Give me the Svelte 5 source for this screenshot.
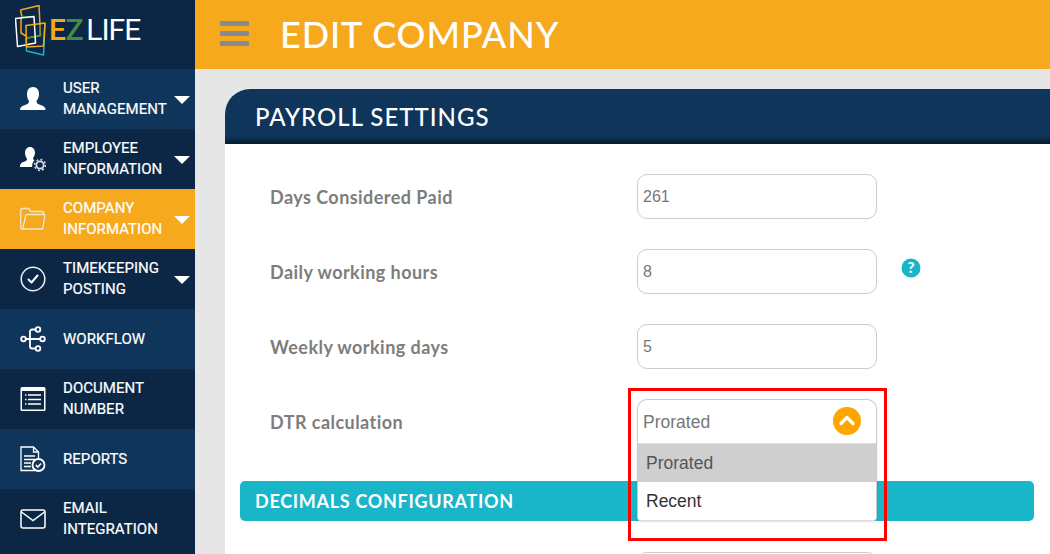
<script>
  const menu = [
    { label: ['USER', 'MANAGEMENT'], icon: 'user', caret: true, tone: 'light' },
    { label: ['EMPLOYEE', 'INFORMATION'], icon: 'usergear', caret: true, tone: 'dark' },
    { label: ['COMPANY', 'INFORMATION'], icon: 'folder', caret: true, tone: 'active' },
    { label: ['TIMEKEEPING', 'POSTING'], icon: 'check', caret: true, tone: 'dark' },
    { label: ['WORKFLOW'], icon: 'flow', caret: false, tone: 'light' },
    { label: ['DOCUMENT', 'NUMBER'], icon: 'list', caret: false, tone: 'dark' },
    { label: ['REPORTS'], icon: 'report', caret: false, tone: 'light' },
    { label: ['EMAIL', 'INTEGRATION'], icon: 'mail', caret: false, tone: 'dark' }
  ];

  const fields = [
    { label: 'Days Considered Paid', value: '261' },
    { label: 'Daily working hours', value: '8', help: true },
    { label: 'Weekly working days', value: '5' }
  ];
</script>

<div class="page">
  <aside class="sidebar">
    <div class="logo">
      <svg class="logo-mark" width="32" height="52" viewBox="15 5 32 52" fill="none" stroke-width="1.500" stroke-linejoin="round">
        <path d="M20.500 10L39 5.500 40.500 35.500 27 38" stroke="#f6a81c" />
        <path d="M20.500 10L22 17M21 17v16l5 3" stroke="#f6a81c" />
        <path d="M21 17h13M40 25v11l-13 2" stroke="#3f8f3f" />
        <path d="M15.500 18.500L34 16.500 35.500 43 17.500 46.500z" stroke="#fff" />
        <path d="M26 38l.5 13 17 4 1.500-32" stroke="#19b5c9" />
        <path d="M26 25.500L45 23l-1.500 23L26.500 47z" stroke="#f6a81c" />
      </svg>
      <span class="wordmark"><span class="e">E</span><span class="z">Z</span><span class="life">LIFE</span></span>
    </div>
    {#each menu as item}
      <div class="item {item.tone}">
        <div class="icon">
          {#if item.icon === 'user'}
            <svg width="26" height="26" viewBox="0 0 26 26" fill="#fff"><path d="M13 1c4 0 6 3 6 7 0 3-1 5-2.500 7 0 2 1 3 4 4 3 1 5 2 5 5H0c0-3 2-4 5-5 3-1 4-2 4-4C7.500 13 7 11 7 8c0-4 2-7 6-7z" /></svg>
          {:else if item.icon === 'usergear'}
            <svg width="26" height="26" viewBox="0 0 26 26" fill="#fff"><path d="M10 1c3 0 5 2.500 5 5.500 0 2-.7 4-2 5.500 0 1 .4 1.700 1.500 2.200-1.600 1.500-2.500 3.400-2.300 6.800H0c0-3 1-4.200 4-5.200 2.300-.8 3-1.500 3-3C5.800 11.500 5 9 5 6.500 5 3.500 7 1 10 1z" /><circle cx="20" cy="19" r="3.600" fill="none" stroke="#d9dde2" stroke-width="1.800" /><circle cx="20" cy="19" r="5.400" fill="none" stroke="#d9dde2" stroke-width="1.500" stroke-dasharray="2 2.200" /></svg>
          {:else if item.icon === 'folder'}
            <svg width="26" height="24" viewBox="0 0 26 24" fill="none" stroke="#efe6d4" stroke-width="1.300"><path d="M4 22H2a1.200 1.200 0 0 1-1.200-1.200V3A1.500 1.500 0 0 1 2.300 1.500h6.500l2 3h11.400a1.500 1.500 0 0 1 1.500 1.500v1.500" /><path d="M4 22h18.500L25 8.500a1 1 0 0 0-1-1H7a1.300 1.300 0 0 0-1.300 1L3 20.500A1.200 1.200 0 0 0 4 22z" /></svg>
          {:else if item.icon === 'check'}
            <svg width="26" height="26" viewBox="0 0 26 26" fill="none" stroke="#eee"><circle cx="13" cy="13" r="11.800" stroke-width="1.500" /><path d="M8.500 13.500l3 3 6-7" stroke="#fff" stroke-width="2" stroke-linecap="round" stroke-linejoin="round" /></svg>
          {:else if item.icon === 'flow'}
            <svg width="26" height="26" viewBox="0 0 26 26" fill="none" stroke="#fff" stroke-width="1.800"><circle cx="3.500" cy="13" r="2.300" /><circle cx="18" cy="3.500" r="2.300" /><circle cx="22.500" cy="13" r="2.300" /><circle cx="18" cy="22.500" r="2.300" /><path d="M6 13h14M15.500 3.500H12a2 2 0 0 0-2 2v15a2 2 0 0 0 2 2h3.500" /></svg>
          {:else if item.icon === 'list'}
            <svg width="26" height="26" viewBox="0 0 26 26"><rect x="0.500" y="1" width="25" height="24" rx="1.500" fill="#fff" /><rect x="2" y="5" width="22" height="18.500" fill="#0b2745" /><path d="M8 9h13M8 13.500h13M8 18h13" stroke="#fff" stroke-width="1.600" /><path d="M5 9h1.500M5 13.500h1.500M5 18h1.500" stroke="#fff" stroke-width="1.600" /></svg>
          {:else if item.icon === 'report'}
            <svg width="26" height="26" viewBox="0 0 26 26" fill="none" stroke="#fff" stroke-width="1.300"><path d="M15 24.500H1V1h12.500l5 5v8" /><path d="M13.500 1v5h5" /><path d="M4 10h11M4 13.500h11M4 17h7M4 20.500h7" /><circle cx="18.500" cy="19" r="6" fill="#10355a" stroke-width="1.800" /><path d="M15.800 19l2 2 3.200-3.500" stroke-width="1.600" /></svg>
          {:else}
            <svg width="26" height="20" viewBox="0 0 26 20" fill="none" stroke="#fff" stroke-width="1.500"><rect x="1" y="1" width="24" height="18" rx="2" /><path d="M1.500 3L13 11.500 24.500 3" /></svg>
          {/if}
        </div>
        <div class="text">
          {#each item.label as line}<div>{line}</div>{/each}
        </div>
        {#if item.caret}<span class="caret"></span>{/if}
      </div>
    {/each}
  </aside>

  <main class="main">
    <header class="topbar">
      <div class="burger"><span></span><span></span><span></span></div>
      <h1>EDIT COMPANY</h1>
    </header>

    <section class="panel">
      <h2 class="panel-head">PAYROLL SETTINGS</h2>
      <div class="panel-body">
        {#each fields as f}
          <div class="row">
            <div class="label">{f.label}</div>
            <div class="input">{f.value}</div>
            {#if f.help}
              <svg class="help" width="20" height="20" viewBox="0 0 20 20"><circle cx="10" cy="10" r="9.500" fill="#19b5c9" /><text x="10" y="15" text-anchor="middle" class="help-mark">?</text></svg>
            {/if}
          </div>
        {/each}

        <div class="row dtr">
          <div class="label">DTR calculation</div>
          <div class="select">
            <div class="select-value">
              Prorated
              <svg class="chev" width="28" height="28" viewBox="0 0 28 28"><circle cx="14" cy="14" r="14" fill="#ffa500" /><path d="M8 16.500l6-6 6 6" fill="none" stroke="#fff" stroke-width="3.200" stroke-linecap="round" stroke-linejoin="round" /></svg>
            </div>
            <div class="option selected">Prorated</div>
            <div class="option">Recent</div>
          </div>
          <div class="highlight"></div>
        </div>

        <div class="section-bar">DECIMALS CONFIGURATION</div>
        <div class="row next">
          <div class="input"></div>
        </div>
      </div>
    </section>
  </main>
</div>

<style>
  :global(body) { margin: 0; background: #e6e6e6; overflow: hidden; }
  .page { display: flex; width: 1050px; height: 554px; overflow: hidden; font-family: Roboto, "Liberation Sans", sans-serif; }

  .sidebar { flex: 0 0 195px; background: #0b2745; }
  .logo { height: 69px; display: flex; align-items: flex-start; padding: 5px 0 0 15px; box-sizing: border-box; }
  .logo-mark { flex: none; }
  .wordmark { margin: 8px 0 0 2px; font-size: 30px; line-height: 34px; letter-spacing: -0.4px; }
  .e { color: #f6a81c; font-weight: 500; }
  .z { color: #3f8f3f; font-weight: 500; margin-right: 3px; }
  .life { color: #fff; font-weight: 400; letter-spacing: -1px; }

  .item { height: 60px; display: flex; align-items: center; position: relative; color: #fff; box-sizing: border-box; }
  .item.light { background: #10355a; }
  .item.dark { background: #0b2745; }
  .item.active { background: #f7a91e; }
  .icon { width: 63px; flex: none; display: flex; padding-left: 20px; box-sizing: border-box; }
  .icon svg { display: block; }
  .text { font-size: 15px; line-height: 21px; font-weight: 400; letter-spacing: 0.05px; -webkit-text-stroke: 0.2px #fff; }
  .caret { position: absolute; left: 174px; top: 27px; border-left: 8px solid transparent; border-right: 8px solid transparent; border-top: 8px solid #fff; }

  .main { flex: 1; min-width: 0; }
  .topbar { height: 69px; background: #f7a91e; display: flex; align-items: center; padding-left: 25px; }
  .burger { width: 29px; display: flex; flex-direction: column; gap: 5px; margin-top: -2px; }
  .burger span { height: 5px; background: #868b91; border-radius: 1px; }
  h1 { margin: -2px 0 0 31px; color: #fff; font-family: Lato, sans-serif; font-weight: 500; font-size: 36px; line-height: 1; letter-spacing: 0.9px; }

  .panel { margin: 20px 0 0 30px; background: #fff; border-top-left-radius: 25px; overflow: hidden; height: 500px; }
  .panel-head { margin: 0; height: 55px; box-sizing: border-box; padding: 14px 0 0 30px; background: linear-gradient(#10355a 0, #10355a 47px, #071a2b 55px); color: #fff; font-family: Lato, sans-serif; font-weight: 500; font-size: 24px; line-height: 28px; letter-spacing: 1px; }
  .panel-body { padding: 30px 16px 0 15px; }

  .row { display: flex; align-items: center; height: 45px; margin-bottom: 30px; position: relative; }
  .label { width: 397px; padding-left: 30px; box-sizing: border-box; color: #7d7d7d; font-family: Lato, sans-serif; font-weight: 700; font-size: 18px; letter-spacing: 0.45px; }
  .input { width: 240px; height: 45px; box-sizing: border-box; border: 1px solid #ccc; border-radius: 10px; padding-left: 5px; color: #777; font-size: 16px; line-height: 43px; font-family: "Liberation Sans", sans-serif; }
  .help { margin: -7px 0 0 24px; }
  .help-mark { fill: #fff; font: 900 15px Lato, sans-serif; }

  .dtr { z-index: 2; margin-bottom: 0; }
  .select { position: absolute; left: 397px; top: 0; width: 240px; box-sizing: border-box; border: 1px solid #ccc; border-bottom-color: #ddd; border-radius: 10px 10px 4px 4px; background: #fff; box-shadow: 0 1px 2px rgba(0, 0, 0, 0.12); font-family: "Liberation Sans", sans-serif; font-size: 17.500px; overflow: hidden; }
  .select-value { height: 44px; box-sizing: border-box; padding-left: 5px; color: #777; line-height: 44px; border-bottom: 1px solid #ddd; position: relative; }
  .chev { position: absolute; right: 15px; top: 7px; }
  .option { height: 38px; line-height: 38px; padding-left: 8px; color: #333; }
  .option.selected { background: #cfcfcf; color: #555; }
  .highlight { position: absolute; left: 388px; top: -11px; width: 259px; height: 153px; box-sizing: border-box; border: 3px solid #f00; pointer-events: none; }

  .section-bar { margin-top: 37px; height: 40px; box-sizing: border-box; background: #19b5c9; border-radius: 5px; color: #fff; font-family: Lato, sans-serif; font-weight: 700; font-size: 18px; line-height: 40px; padding-left: 15px; letter-spacing: 0.7px; }
  .row.next { margin-top: 31px; padding-left: 397px; }
</style>
